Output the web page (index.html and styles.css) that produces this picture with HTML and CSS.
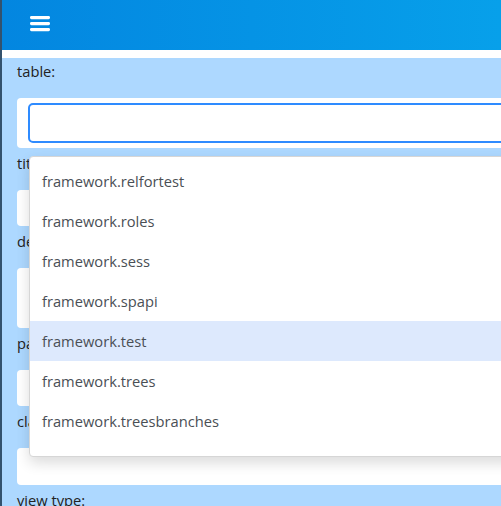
FILE: index.html
```html
<!DOCTYPE html>
<html>
<head>
<meta charset="utf-8">
<link rel="stylesheet" href="styles.css">
</head>
<body>
<div class="app">
  <header class="topbar">
    <button class="menu-btn" aria-label="menu">
      <svg width="20" height="16" viewBox="0 0 20 16"><rect x="0" y="0" width="20" height="3.2" rx="1.4" fill="#fff"/><rect x="0" y="6" width="20" height="3.2" rx="1.4" fill="#fff"/><rect x="0" y="12" width="20" height="3.2" rx="1.4" fill="#fff"/></svg>
    </button>
  </header>
  <main class="form">
    <div class="field">
      <label class="label">table:</label>
      <div class="card card-input">
        <div class="combo">
          <input class="input" type="text">
          <ul class="dropdown">
            <li class="opt">framework.relfortest</li>
            <li class="opt">framework.roles</li>
            <li class="opt">framework.sess</li>
            <li class="opt">framework.spapi</li>
            <li class="opt active">framework.test</li>
            <li class="opt">framework.trees</li>
            <li class="opt">framework.treesbranches</li>
            <li class="opt">framework.users</li>
          </ul>
        </div>
      </div>
    </div>
    <div class="field">
      <label class="label">title:</label>
      <div class="card h36"></div>
    </div>
    <div class="field">
      <label class="label">description:</label>
      <div class="card h60"></div>
    </div>
    <div class="field">
      <label class="label">parent:</label>
      <div class="card h36"></div>
    </div>
    <div class="field">
      <label class="label">class:</label>
      <div class="card h37"></div>
    </div>
    <div class="field">
      <label class="label">view type:</label>
    </div>
  </main>
</div>
</body>
</html>
```

FILE: styles.css
```css
* { box-sizing: border-box; }
html, body { margin: 0; padding: 0; }
body {
  width: 501px;
  height: 506px;
  overflow: hidden;
  font-family: "Open Sans", "Noto Sans", sans-serif;
  background: #fff;
}
.app {
  border-left: 2px solid #33526e;
  min-height: 506px;
  background: #add8ff;
}
.topbar {
  height: 50px;
  background: linear-gradient(to right, #0386e0, #07a0ea);
  display: flex;
  align-items: center;
  padding-left: 28px;
  border-bottom: 8px solid #fff;
  box-sizing: content-box;
}
.menu-btn {
  background: none;
  border: 0;
  padding: 0;
  margin-top: -3px;
  display: flex;
}
.form {
  padding: 1px 0 0 15px;
}
.field { display: flex; flex-direction: column; }
.label {
  font-size: 14.7px;
  line-height: 24px;
  height: 24px;
  color: #222;
  margin-bottom: 15px;
}
.card {
  background: #fff;
  border-radius: 4px;
  width: 600px;
  margin-bottom: 3px;
}
.card-input {
  height: 50px;
  padding: 5px 11px;
}
.h36 { height: 36px; }
.h37 { height: 37px; }
.h60 { height: 60px; }
.combo { position: relative; }
.input {
  display: block;
  width: 100%;
  height: 40px;
  border: 2px solid #2e8bff;
  border-radius: 5px;
  outline: none;
  background: #fff;
  font: inherit;
}
.dropdown {
  position: absolute;
  z-index: 5;
  left: 1px;
  top: 53px;
  width: 560px;
  height: 301px;
  overflow: hidden;
  margin: 0;
  padding: 4px 0 0;
  list-style: none;
  background: #fff;
  border: 1px solid #d6d6d6;
  border-radius: 4px;
  box-shadow: 0 6px 14px rgba(0,0,0,0.14);
}
.opt {
  height: 40px;
  line-height: 40px;
  padding-left: 12px;
  font-size: 14.7px;
  color: #4a4f55;
}
.opt.active { background: #dde9fd; }
```
